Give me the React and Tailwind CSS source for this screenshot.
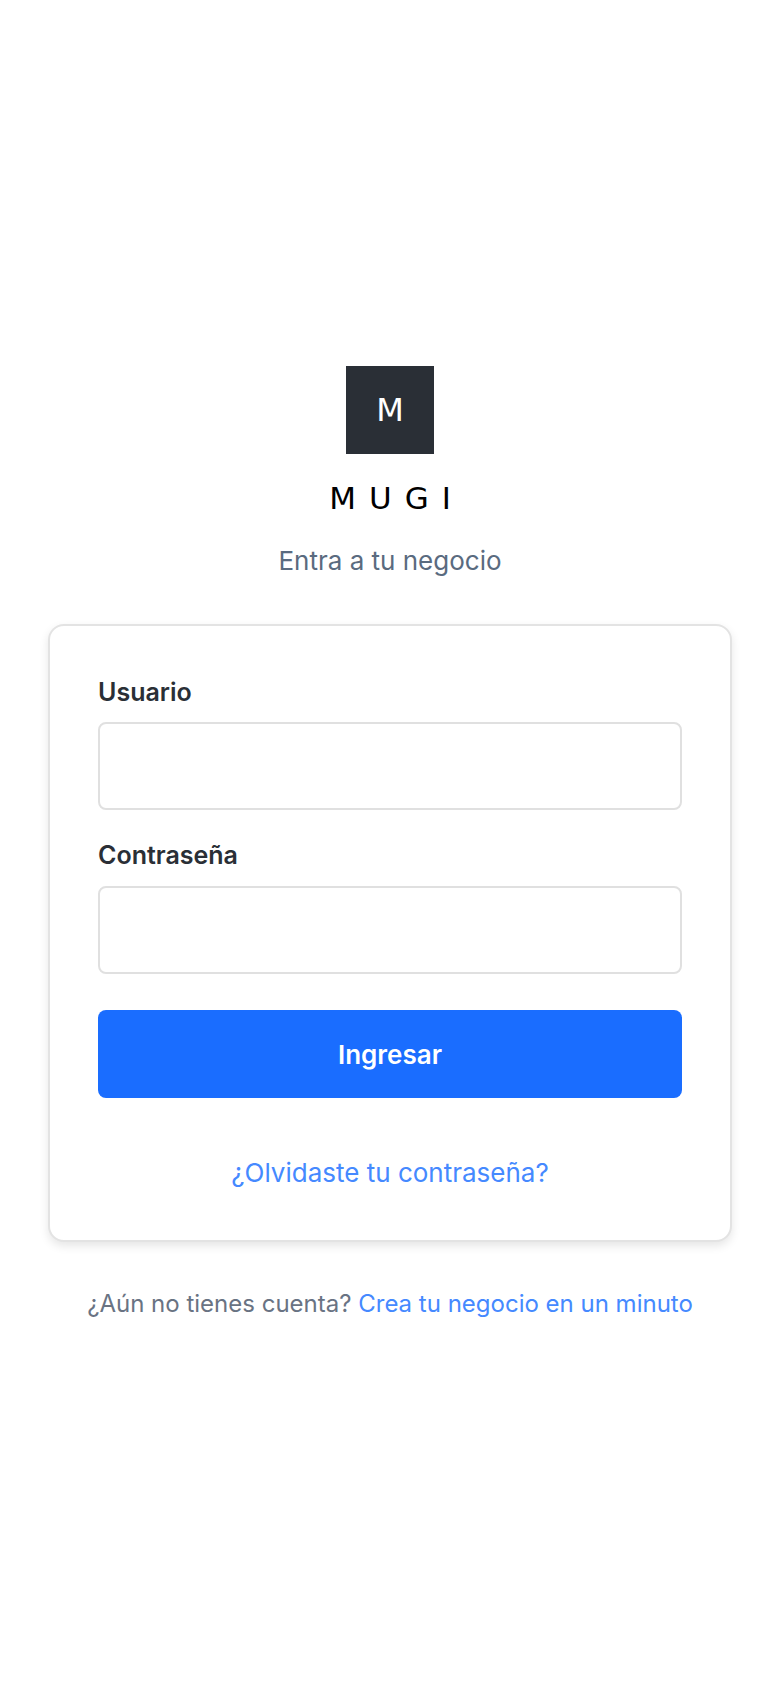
export default function App() {
  return (
    <div className="min-h-[1688px] bg-white flex flex-col items-center justify-center px-12 pb-[2px] font-['Inter',sans-serif]">
      <div className="w-[88px] h-[88px] bg-[#2a2f36] flex items-center justify-center">
        <span className="text-[32px] leading-none text-white font-['DejaVu_Sans',sans-serif]">M</span>
      </div>
      <h1 className="mt-[24px] text-[31px] leading-[40px] font-normal tracking-[0.42em] pl-[0.42em] text-black font-['DejaVu_Sans',sans-serif]">MUGI</h1>
      <p className="mt-[27px] text-[26px] leading-[32px] text-[#5a6b7f]">Entra a tu negocio</p>

      <div className="mt-[47px] w-full bg-white border-2 border-[#e3e3e3] rounded-[16px] shadow-[0_4px_10px_rgba(0,0,0,0.1)] px-[48px] pt-[50px] pb-[51px]">
        <label className="block text-[25px] leading-[32px] font-semibold text-[#2a2f36]">Usuario</label>
        <input className="mt-[14px] block w-full h-[88px] border-2 border-[#e0e0e0] rounded-[8px] bg-white" />
        <label className="block mt-[29px] text-[25px] leading-[32px] font-semibold text-[#2a2f36]">Contraseña</label>
        <input className="mt-[15px] block w-full h-[88px] border-2 border-[#e0e0e0] rounded-[8px] bg-white" />
        <button className="mt-[36px] w-full h-[88px] rounded-[8px] bg-[#1a6dff] text-white text-[26px] font-semibold">Ingresar</button>
        <div className="mt-[59px] text-center text-[26px] leading-[32px] text-[#4589ff]">¿Olvidaste tu contraseña?</div>
      </div>

      <p className="mt-[46px] text-center text-[24px] leading-[32px] text-[#697383]">
        ¿Aún no tienes cuenta? <span className="text-[#4589ff]">Crea tu negocio en un minuto</span>
      </p>
    </div>
  )
}
